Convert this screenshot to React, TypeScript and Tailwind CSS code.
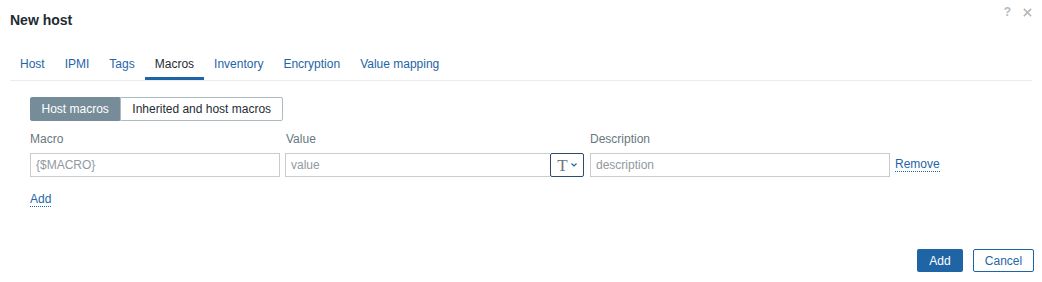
import React, { useState } from "react";

const tabs = ["Host", "IPMI", "Tags", "Macros", "Inventory", "Encryption", "Value mapping"];

const App: React.FC = () => {
  const [tab, setTab] = useState("Macros");
  const [mode, setMode] = useState(0);

  return (
    <div className="w-[1042px] h-[282px] bg-white font-['Liberation_Sans',Arial,sans-serif] text-[12px] text-[#1f2c33] relative">
      {/* header */}
      <div className="flex items-center justify-between h-[40px] pl-[10px] pr-[10px]">
        <h1 className="text-[14px] font-bold text-[#1f2c33] mt-[1px]">New host</h1>
        <div className="flex items-center gap-[12px] text-[#b5babd] -mt-[16px]">
          <span className="text-[12px] font-bold">?</span>
          <svg width="9" height="9" viewBox="0 0 10 10" stroke="currentColor" strokeWidth="1.8">
            <path d="M1 1 L9 9 M9 1 L1 9" />
          </svg>
        </div>
      </div>

      {/* tabs */}
      <div className="mx-[10px] mt-[14px] flex border-b border-[#ebeef0] h-[27px]">
        {tabs.map((t) => (
          <button
            key={t}
            onClick={() => setTab(t)}
            className={`px-[10px] h-[26px] pb-[3px] border-b-[3px] ${
              tab === t ? "border-[#1f65a6] text-[#1f2c33]" : "border-transparent text-[#1f65a6]"
            }`}
          >
            {t}
          </button>
        ))}
      </div>

      {/* content */}
      <div className="pl-[30px] pt-[16px]">
        <div className="flex h-[24px]">
          <button
            onClick={() => setMode(0)}
            className={`px-[10.5px] rounded-l-[2px] border ${
              mode === 0 ? "bg-[#768d99] border-[#768d99] text-white" : "bg-white border-[#acbbc2] text-[#1f2c33]"
            }`}
          >
            Host macros
          </button>
          <button
            onClick={() => setMode(1)}
            className={`px-[11px] rounded-r-[2px] border ${
              mode === 1 ? "bg-[#768d99] border-[#768d99] text-white" : "bg-white border-[#acbbc2] text-[#1f2c33]"
            }`}
          >
            Inherited and host macros
          </button>
        </div>

        <div className="grid grid-cols-[250px_299px_300px_auto] gap-x-[5px] mt-[11px] text-[#687780]">
          <div className="h-[14px] leading-[14px]">Macro</div>
          <div className="h-[14px] leading-[14px] pl-[1px]">Value</div>
          <div className="h-[14px] leading-[14px] pl-[1px]">Description</div>
          <div />
        </div>

        <div className="flex items-center mt-[7px] h-[24px]">
          <input
            placeholder="{$MACRO}"
            className="w-[250px] h-[24px] border border-[#c8ccce] px-[5px] outline-none placeholder:text-[#929a9f]"
          />
          <div className="flex ml-[5px]">
            <input
              placeholder="value"
              className="w-[265px] h-[24px] border border-r-0 border-[#c8ccce] px-[5px] outline-none placeholder:text-[#929a9f]"
            />
            <button className="w-[34px] h-[24px] border border-[#2f4b6c] rounded-[2px] flex items-center justify-center gap-[3px] text-[#687780]">
              <span className="font-['Liberation_Serif',serif] text-[17px] leading-none">T</span>
              <svg width="6" height="4" viewBox="0 0 6 4" className="text-[#1f65a6]">
                <path d="M0.5 0.5 L3 3 L5.5 0.5" fill="none" stroke="currentColor" strokeWidth="1.2" />
              </svg>
            </button>
          </div>
          <input
            placeholder="description"
            className="w-[300px] h-[24px] ml-[6px] border border-[#c8ccce] px-[5px] outline-none placeholder:text-[#929a9f]"
          />
          <a className="ml-[5px] text-[#1f65a6] border-b border-dotted border-[#1f65a6] leading-[13px] cursor-pointer">
            Remove
          </a>
        </div>

        <div className="mt-[13px]">
          <a className="text-[#1f65a6] border-b border-dotted border-[#1f65a6] leading-[13px] cursor-pointer">Add</a>
        </div>
      </div>

      {/* footer */}
      <div className="absolute right-[8px] top-[249px] flex gap-[10px]">
        <button className="w-[46px] h-[23px] bg-[#1f65a6] text-white rounded-[2px] text-[12px]">Add</button>
        <button className="w-[61px] h-[23px] bg-white border border-[#1f65a6] text-[#1f65a6] rounded-[2px] text-[12px]">
          Cancel
        </button>
      </div>
    </div>
  );
};

export default App;
